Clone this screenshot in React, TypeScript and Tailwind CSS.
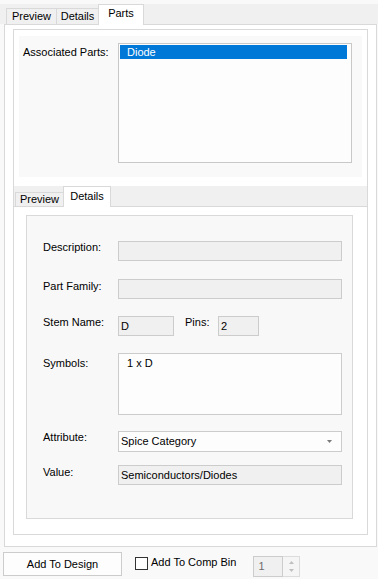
import React from 'react'

// small helpers for the WinForms-like controls
function FieldRow({ label, labelTop = 0, top, children }: { label: string; labelTop?: number; top: string; children: React.ReactNode }) {
  return (
    <div className={`flex items-start ${top}`}>
      <div className="w-[91px] pl-[16px] leading-[13px]" style={{ marginTop: labelTop }}>
        {label}
      </div>
      {children}
    </div>
  )
}

export default function App() {
  return (
    <div className="w-[378px] h-[579px] overflow-hidden bg-[#f9f9f9] text-black text-[11px] leading-[13px] font-['Liberation_Sans',Arial,sans-serif]">
      {/* Outer tabs */}
      <div className="mt-[4px] h-[20px] bg-[#f0f0f0] flex items-end pl-[6px]">
        <div className="h-[16px] w-[51px] border border-b-0 border-[#d9d9d9] bg-[#f0f0f0] flex items-center justify-center">
          Preview
        </div>
        <div className="-ml-[1px] h-[16px] w-[43px] border border-b-0 border-[#d9d9d9] bg-[#f0f0f0] flex items-center justify-center">
          Details
        </div>
        <div className="-ml-[1px] relative z-10 -mb-[1px] h-[21px] w-[46px] border border-b-0 border-[#d9d9d9] bg-white flex justify-center pt-[2px]">
          Parts
        </div>
      </div>

      {/* Outer tab page */}
      <div className="ml-[4px] w-[373px] h-[523px] border border-[#d9d9d9] bg-white pt-[4px] pl-[8px]">
        <div className="w-[355px] h-[506px] border border-[#d9d9d9] bg-white flex flex-col">
          {/* Parts panel */}
          <div className="ml-[5px] mt-[6px] w-[343px] h-[141px] bg-[#f9f9f9] flex items-start">
            <div className="w-[99px] pl-[4px] pt-[10px]">Associated Parts:</div>
            <div className="mt-[7px] w-[234px] h-[120px] border border-[#c8c8c8] bg-[#fdfdfd] pl-[1px] pt-[1px]">
              <div className="w-[227px] h-[14px] bg-[#0078d7] text-white pl-[7px] leading-[14px]">Diode</div>
            </div>
          </div>

          {/* Inner tabs */}
          <div className="mt-[9px] h-[20px] bg-[#f0f0f0] flex items-end pl-[1px]">
            <div className="h-[14px] w-[49px] border border-b-0 border-[#d9d9d9] bg-[#f0f0f0] flex justify-center">
              Preview
            </div>
            <div className="-ml-[1px] relative z-10 -mb-[1px] h-[21px] w-[48px] border border-b-0 border-[#d9d9d9] bg-white flex justify-center pt-[3px]">
              Details
            </div>
          </div>

          {/* Inner tab page */}
          <div className="flex-1 border-t border-[#d9d9d9] bg-white pl-[12px] pt-[8px]">
            <div className="w-[327px] h-[304px] border border-[#d9d9d9] bg-[#f8f8f8] pt-[25px]">
              <FieldRow label="Description:" top="">
                <div className="w-[224px] h-[20px] border border-[#cccccc] bg-[#f0f0f0]" />
              </FieldRow>

              <FieldRow label="Part Family:" labelTop={1} top="mt-[18px]">
                <div className="w-[224px] h-[20px] border border-[#cccccc] bg-[#f0f0f0]" />
              </FieldRow>

              <FieldRow label="Stem Name:" top="mt-[17px]">
                <div className="w-[56px] h-[20px] border border-[#cccccc] bg-[#f0f0f0] pl-[2px] flex items-center">D</div>
                <div className="ml-[11px] w-[33px] leading-[13px]">Pins:</div>
                <div className="w-[41px] h-[20px] border border-[#cccccc] bg-[#f0f0f0] pl-[2px] flex items-center">2</div>
              </FieldRow>

              <FieldRow label="Symbols:" labelTop={4} top="mt-[17px]">
                <div className="w-[224px] h-[62px] border border-[#cccccc] bg-[#fdfdfd] pl-[8px] pt-[3px]">1 x D</div>
              </FieldRow>

              <FieldRow label="Attribute:" top="mt-[16px]">
                <div className="w-[224px] h-[21px] border border-[#cccccc] bg-[#fdfdfd] pl-[2px] pr-[9px] flex items-center justify-between">
                  <span>Spice Category</span>
                  <svg width="5" height="3" viewBox="0 0 5 3">
                    <path d="M0 0h5L2.5 3z" fill="#7a7a7a" />
                  </svg>
                </div>
              </FieldRow>

              <FieldRow label="Value:" labelTop={1} top="mt-[13px]">
                <div className="w-[224px] h-[20px] border border-[#cccccc] bg-[#f0f0f0] pl-[2px] flex items-center">
                  Semiconductors/Diodes
                </div>
              </FieldRow>
            </div>
          </div>
        </div>
      </div>

      {/* Bottom bar */}
      <div className="mt-[5px] flex items-start">
        <button className="ml-[3px] w-[119px] h-[24px] border border-[#cccccc] bg-[#fdfdfd] text-[11px]">
          Add To Design
        </button>
        <div className="ml-[13px] mt-[5px] w-[13px] h-[13px] border border-[#333333] bg-white" />
        <div className="ml-[3px] mt-[4px]">Add To Comp Bin</div>
        <div className="ml-[17px] mt-[4px] flex">
          <div className="w-[30px] h-[21px] border border-[#cccccc] bg-[#f0f0f0] pl-[4px] flex items-center text-[#6d6d6d]">1</div>
          <div className="w-[17px] h-[21px] border border-l-0 border-[#dcdcdc] bg-[#f5f5f5] flex flex-col items-center justify-center gap-[5px]">
            <svg width="5" height="3" viewBox="0 0 5 3"><path d="M0 3h5L2.5 0z" fill="#bfbfbf" /></svg>
            <svg width="5" height="3" viewBox="0 0 5 3"><path d="M0 0h5L2.5 3z" fill="#bfbfbf" /></svg>
          </div>
        </div>
      </div>
    </div>
  )
}
